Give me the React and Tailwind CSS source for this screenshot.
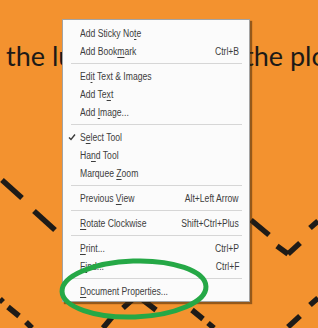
import React from 'react';

// Context menu items; "key" is the underlined access letter index
const menuItems = [
  { label: 'Add Sticky Note', key: 13 },
  { label: 'Add Bookmark', key: 8, shortcut: 'Ctrl+B' },
  { sep: true },
  { label: 'Edit Text & Images', key: 2 },
  { label: 'Add Text', key: 6 },
  { label: 'Add Image...', key: 4 },
  { sep: true },
  { label: 'Select Tool', key: 1, checked: true },
  { label: 'Hand Tool', key: 2 },
  { label: 'Marquee Zoom', key: 8 },
  { sep: true },
  { label: 'Previous View', key: 9, shortcut: 'Alt+Left Arrow' },
  { sep: true },
  { label: 'Rotate Clockwise', key: 0, shortcut: 'Shift+Ctrl+Plus' },
  { sep: true },
  { label: 'Print...', key: 0, shortcut: 'Ctrl+P' },
  { label: 'Find...', key: 1, shortcut: 'Ctrl+F' },
  { sep: true },
  { label: 'Document Properties...', key: 0 },
];

const Label = ({ text, index }) => (
  <span className="flex whitespace-pre origin-left scale-x-[0.86]">
    <span>{text.slice(0, index)}</span>
    <span className="underline underline-offset-[2px]">{text[index]}</span>
    <span>{text.slice(index + 1)}</span>
  </span>
);

const MenuRow = ({ item }) => {
  if (item.sep) {
    return (
      <div className="h-[7px] flex items-center pl-[8px] pr-[7px]">
        <div className="h-px w-full bg-[#d6d6d6]"></div>
      </div>
    );
  }
  return (
    <div className="relative h-[18px] flex items-center justify-between pl-[17px] pr-[10px]">
      {item.checked && (
        <svg className="absolute left-[5px] top-[5px]" width="8" height="8" viewBox="0 0 8 8">
          <polyline points="1,4.5 3,6.5 7,1.5" fill="none" stroke="#3a3a3a" strokeWidth="1.4" />
        </svg>
      )}
      <Label text={item.label} index={item.key} />
      {item.shortcut && <span className="origin-right scale-x-[0.86]">{item.shortcut}</span>}
    </div>
  );
};

// Dashed zig-zag lines drawn on the page behind the menu
const dashes = [
  [2, 180, 22, 198],
  [34, 211, 55, 230],
  [0, 299, 3, 302],
  [8, 307, 19, 316],
  [26, 322, 32, 328],
  [132, 300, 123, 308],
  [113, 316, 103, 328],
  [143, 300, 156, 310],
  [192, 310, 203, 319],
  [208, 323, 214, 328],
  [251, 220, 269, 235],
  [277, 246, 288, 254],
  [288, 254, 300, 243],
  [310, 228, 318, 221],
  [310, 305, 318, 298],
  [288, 327, 300, 316],
];

const App = () => {
  return (
    <div className="relative w-[318px] h-[328px] overflow-hidden bg-[#f3922f]">
      {/* Page text under the menu */}
      <div
        className="flex whitespace-nowrap pt-[39px] pl-[6px] text-[27px] leading-[34px] text-[#1d1a17]"
        style={{ fontFamily: 'Lato, "Open Sans", sans-serif' }}
      >
        <span className="w-[238px] shrink-0">the lumin</span>
        <span className="shrink-0">the plot</span>
      </div>

      <svg className="absolute inset-0" width="318" height="328">
        {dashes.map(([x1, y1, x2, y2], i) => (
          <line key={i} x1={x1} y1={y1} x2={x2} y2={y2} stroke="#1e1b18" strokeWidth="5.5" />
        ))}
      </svg>

      {/* Context menu */}
      <div
        className="absolute left-[62px] top-[19px] w-[188px] bg-[#fbfbfb] border border-[#a3a3a3] pt-[4px] pb-[1px] text-[10px] text-[#3d3d3d] shadow-[2px_2px_1px_rgba(70,40,10,0.55)]"
        style={{ fontFamily: '"Liberation Sans", Arial, sans-serif' }}
      >
        {menuItems.map((item, i) => (
          <MenuRow key={i} item={item} />
        ))}
      </div>

      {/* Green annotation ellipse */}
      <svg className="absolute inset-0 pointer-events-none" width="318" height="328">
        <ellipse cx="134" cy="289" rx="72" ry="28" fill="none" stroke="#25a846" strokeWidth="5" transform="rotate(-2 134 289)" />
      </svg>
    </div>
  );
};

export default App;
